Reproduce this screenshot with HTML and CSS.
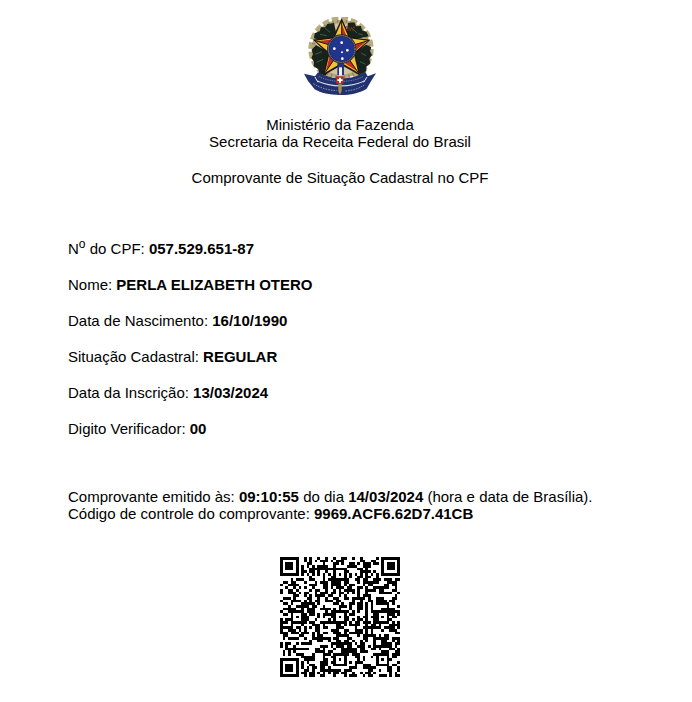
FILE: index.html
```html
<!DOCTYPE html>
<html lang="pt-BR">
<head>
<meta charset="utf-8">
<title>Comprovante de Situação Cadastral no CPF</title>
<link rel="stylesheet" href="styles.css">
</head>
<body>
<main class="receipt">
  <header class="heading">
    <svg class="arms" viewBox="24 20 216 234" role="img" aria-label="Brasão da República">
      <circle cx="135" cy="116" r="88" fill="#b3a87c"/>
      <circle cx="135" cy="116" r="91" fill="none" stroke="#b9ac7a" stroke-width="14" stroke-dasharray="20 8.6"/>
      <circle cx="135" cy="116" r="84" fill="none" stroke="#8f8460" stroke-width="9" stroke-dasharray="4 9.2"/>
      <circle cx="135" cy="116" r="77" fill="#cfc6a0"/>
      <path fill="#17231b" d="M114 38l-20 3-6 10-13 0-4 12-15 6-2 14 24 12 30-8 12-22zM60 104l-13 15 4 12-5 12 8 11-1 14 14 9 3 13 19 6 12-24 5-34-18-18zM156 38l-4 26 12 22 30-3 24-5-7-14-13-4-3-13-15 1-5-12zM210 103l-26 18-10 14 6 32 12 26 19-10 0-14 12-10-3-13 8-12-6-12 4-11z"/>
      <path fill="none" stroke="#415d43" stroke-width="3" d="M72 72l20 4M88 54l14 12M58 132l20-8M62 156l19-9M169 54l14 14M186 70l15 4M196 128l14 8M192 154l17 8"/>
      <path fill="none" stroke="#a63a28" stroke-width="4" stroke-dasharray="4 4" d="M150 49l12 6 17-6M153 60l20-2"/>
      <path fill="#211511" d="M137 24l26 56 60 8-46 44 16 64-56-31-56 31 16-64-46-44 60-8z"/>
      <path fill="#f0c52f" d="M137 33l22 51 57 7-43 37 14 59-50-29-50 29 14-59-43-37 57-7z"/>
      <path fill="#c72c20" d="M137 40v75l18-29zM211 93l-74 22 33 13zM184 183l-47-68v38zM90 183l47-68-34 13zM63 93l74 22-18-29z"/>
      <path fill="none" stroke="#211511" stroke-width="3" d="M137 32v83l82-25M137 115l50 72M137 115l-50 72M137 115l-82-25"/>
      <path fill="#26367e" d="M124 158h20v36h-20z"/>
      <path fill="#f4f2ec" d="M129 171h9v25h-9z"/>
      <circle cx="137" cy="116" r="44" fill="#262849"/>
      <circle cx="137" cy="116" r="40" fill="none" stroke="#9d9670" stroke-width="3" stroke-dasharray="4 2"/>
      <circle cx="137" cy="116" r="37" fill="#21358e"/>
      <g fill="#fff"><circle cx="137" cy="97" r="4"/><circle cx="115" cy="115" r="4"/><circle cx="154" cy="120" r="4"/><circle cx="138" cy="126" r="3"/><circle cx="139" cy="145" r="4"/></g>
      <path fill="#22316f" d="M24 190l33 8 9-12c36 22 103 28 141-3l8 15 25-9-15 24-13 22c-38 25-118 25-156 2l-20-25z"/>
      <path fill="none" stroke="#9aa4cb" stroke-width="2" stroke-dasharray="4 3" d="M68 198c30 17 95 23 134 0"/>
      <path fill="none" stroke="#bcc3dd" stroke-width="2" stroke-dasharray="5 3" d="M52 220c24 15 48 20 70 21M148 242c24-2 39-6 56-18"/>
      <path fill="none" stroke="#eceef7" stroke-width="3" d="M57 200l9 16M213 200l-10 16"/>
      <path fill="#dfe3f0" d="M64 210c38 20 105 20 141 0l-2 4c-38 19-99 19-137 0z"/>
      <path fill="#b92a27" d="M120 198h23v22h-23z"/>
      <path fill="#fff" d="M129 202h6v5h5v5h-5v5h-6v-5h-5v-5h5z"/>
      <path fill="#a98f48" d="M127 220h10v22l-5 11-5-11z"/>
    </svg>
    <p class="line">Ministério da Fazenda</p>
    <p class="line">Secretaria da Receita Federal do Brasil</p>
    <h1 class="title">Comprovante de Situação Cadastral no CPF</h1>
  </header>
  <section class="fields">
    <p class="line">N<sup class="ordinal">o</sup> do CPF: <b>057.529.651-87</b></p>
    <p class="line">Nome: <b>PERLA ELIZABETH OTERO</b></p>
    <p class="line">Data de Nascimento: <b>16/10/1990</b></p>
    <p class="line">Situação Cadastral: <b>REGULAR</b></p>
    <p class="line">Data da Inscrição: <b>13/03/2024</b></p>
    <p class="line">Digito Verificador: <b>00</b></p>
  </section>
  <section class="issue">
    <p class="line">Comprovante emitido às: <b>09:10:55</b> do dia <b>14/03/2024</b> (hora e data de Brasília).</p>
    <p class="line">Código de controle do comprovante: <b>9969.ACF6.62D7.41CB</b></p>
  </section>
  <svg class="code" viewBox="0 0 45 45" shape-rendering="crispEdges" role="img" aria-label="Código QR"><path id="modules"/></svg>
</main>
<script src="script.js"></script>
</body>
</html>
```
FILE: styles.css
```css
body {
  margin: 0;
  background: #fff;
  color: #000;
  font: 15px/17px "Liberation Sans", Arial, sans-serif;
}

.receipt {
  display: flex;
  flex-direction: column;
  padding: 17px 80px 24px 68px;
}

.heading {
  text-align: center;
}

.arms {
  display: block;
  width: 72px;
  height: 78px;
  margin: 0 auto 21px;
}

.line {
  margin: 0;
}

.title {
  margin: 19px 0 0;
  font: inherit;
}

.fields {
  display: grid;
  gap: 19px;
  margin-top: 54px;
}

.ordinal {
  font-size: 12px;
  line-height: 0;
}

.issue {
  margin-top: 51px;
}

.code {
  align-self: center;
  width: 120px;
  height: 120px;
  margin-top: 35px;
}
```
FILE: script.js
```js
const SIZE = 45;
const FINDERS = [[3, 3], [41, 3], [3, 41]];
const ALIGNMENTS = [[22, 6], [6, 22], [22, 22], [38, 22], [22, 38], [38, 38]];

let seed = 7529;
function nextBit() {
  seed = (seed * 1103515245 + 12345) % 2147483648;
  return seed / 2147483648 < 0.52;
}

function distance(x, y, center) {
  return Math.max(Math.abs(x - center[0]), Math.abs(y - center[1]));
}

function isDark(x, y) {
  const bit = nextBit();
  for (const center of FINDERS) {
    const d = distance(x, y, center);
    if (d <= 4) return d !== 2 && d !== 4;
  }
  for (const center of ALIGNMENTS) {
    const d = distance(x, y, center);
    if (d <= 2) return d !== 1;
  }
  if (x === 6 || y === 6) return (x + y) % 2 === 0;
  return bit;
}

let path = "";
for (let y = 0; y < SIZE; y++) {
  for (let x = 0; x < SIZE; x++) {
    if (isDark(x, y)) path += `M${x} ${y}h1v1h-1z`;
  }
}
document.getElementById("modules").setAttribute("d", path);
```
